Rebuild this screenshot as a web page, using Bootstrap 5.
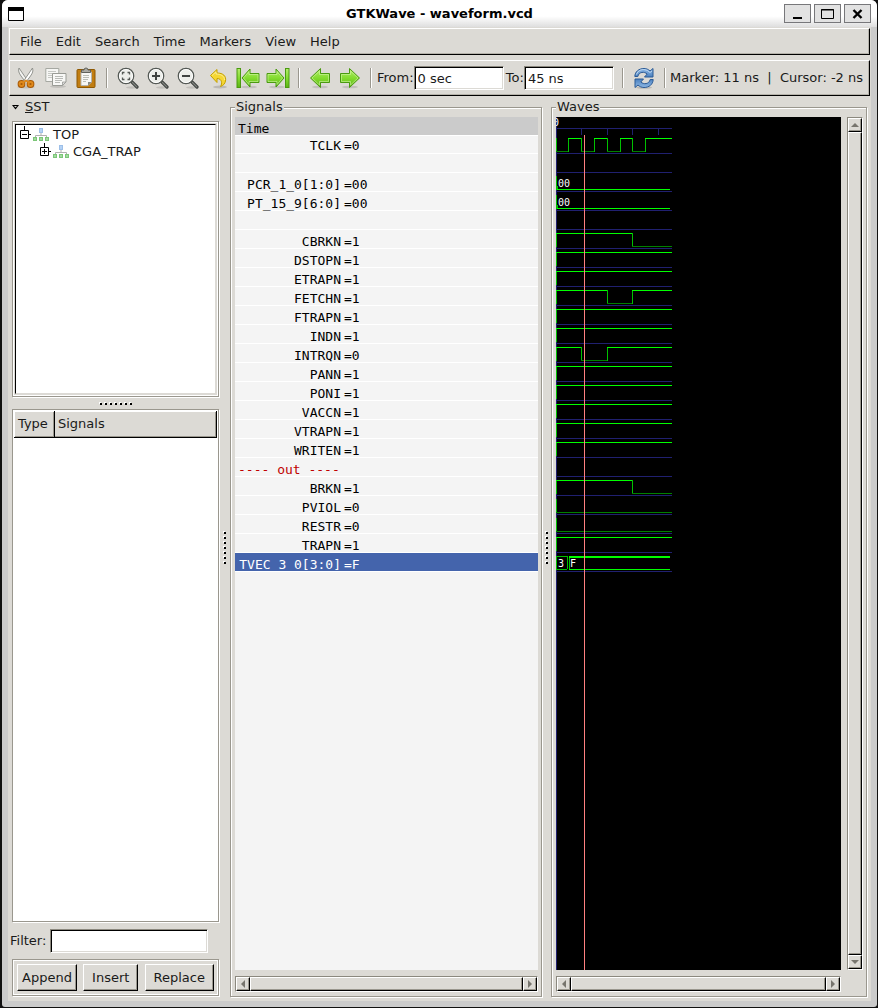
<!DOCTYPE html>
<html lang="en">
<head>
<meta charset="utf-8">
<meta name="viewport" content="width=device-width, initial-scale=1">
<title>GTKWave - waveform.vcd</title>
<link href="https://cdn.jsdelivr.net/npm/bootstrap@5.3.0/dist/css/bootstrap.min.css" rel="stylesheet">
<style>
:root{--face:#dcdad5;--shade:#9a978e;--edge:#cbcbcb}
body{background:#111;font:13px/16px "DejaVu Sans",sans-serif;color:#1a1a1a;padding:0 1px 1px 2px}
.app-window{background:var(--edge);border-radius:6px 6px 3px 3px;overflow:hidden}
.title-bar{height:27px;background:linear-gradient(#fff 60%,#dedede);padding:0 6px;color:#000}
.title-bar h1{font-size:13px;line-height:16px;font-weight:bold}
.win-btns{gap:3px}
.win-btn{width:27px;height:19px;padding:0;border:1px solid #77777a;background:#e2e2e2;border-radius:0;line-height:0}
.app-body{background:var(--face);margin:0 6px 6px;padding:1px 1px 0;min-height:0}
.bar{border:1px solid #fff;border-right-color:#000;border-bottom-color:#000;box-shadow:inset -1px -1px #b5b2aa}
.menu-bar{height:27px;padding:0 3px}
.menu-bar a{color:#1a1a1a;padding:0 7px;line-height:25px}
.menu-bar a:hover{color:#000}
.tool-bar{height:36px;margin-top:5px;padding:0 2px 0 1px}
.tool-btn{width:30px;height:30px;padding:0;border:0;background:none;line-height:0}
.tool-btn svg{width:22px;height:22px}
.tool-btn .wide-icon{width:24px}
.tool-sep{width:2px;height:20px;margin:0 5px;border-left:1px solid var(--shade);border-right:1px solid #fff}
.to-label{margin-left:2px}
.status-text{white-space:pre}
.sunken{border:1px solid;border-color:#8b887e #fff #fff #8b887e;box-shadow:inset 1px 1px #000,inset -1px -1px #dcdad5;background:#fff;border-radius:0;color:#1a1a1a;height:24px;padding:2px 3px;font-size:13px;min-width:0;outline:0}
.raised{background:var(--face);border:1px solid;border-color:#fff #000 #000 #fff;box-shadow:inset -1px -1px var(--shade);border-radius:0;color:#1a1a1a}
.etched{border:1px solid var(--shade);outline:1px solid #fff;outline-offset:-2px;box-shadow:1px 1px #fff}
.main-grid{display:grid;grid-template-columns:minmax(0,207fr) 11px minmax(0,312fr) 9px minmax(0,316fr);padding:3px 3px 4px;min-height:0}
.side-col{min-height:0;padding-bottom:1px}
.sst-row{gap:6px}
.tree-box{height:276px;margin-top:6px;padding:2px;background:var(--face)}
.tree-inner{background:#fff;height:100%;border:1px solid;border-color:#000 #dcdad5 #dcdad5 #000;padding:1px 0 0 3px}
.tree-inner li{height:17px}
.grip-row{height:12px}
.grip{width:36px;height:3px}
.grip-tall{width:3px;height:36px}
.list-box{background:#fff;padding:1px;min-height:0}
.list-box th{height:26px;padding:0 3px 1px;font-weight:normal;background:var(--face)}
.list-box .type-col{width:40px}
.filter-row{margin:7px 11px 6px -2px}
.btn-cell{padding:4px}
.btn-cell .btn{font-size:13px;line-height:16px;padding:4px 8px;height:27px}
.btn-cell .btn:first-child{padding:4px}
.pane{border:1px solid var(--shade);box-shadow:1px 1px #fff,inset 1px 1px #fff;padding:2px 3px 4px 4px;min-height:0}
.pane legend{float:none;width:auto;font-size:13px;line-height:16px;margin:0;padding:0 1px;background:var(--face)}
.sig-pane{background:#f4f4f4;overflow:hidden;min-height:0;font-family:"DejaVu Sans Mono",monospace;color:#000}
.sig-head{background:#cbcbcb;height:18px;line-height:24px;padding-left:3px;box-shadow:0 1px #fff}
.sig-table{width:100%;table-layout:fixed;margin-top:-1px}
.sig-table td{height:19px;line-height:18px;padding:3px 0 0;border-bottom:1px solid #fff;white-space:pre;vertical-align:top}
.sig-table td span{display:block;height:15px;line-height:17px}
.sig-name{width:107px;text-align:right}
.sig-table td.sig-name{padding-right:1px}
.sig-table .sig-val{padding-left:2px}
.sig-table .chosen td{background:#4464ac;color:#fff}
.sig-table .divider-row td{color:#c00000;padding-left:3px}
.wave-row{min-height:0;gap:6px}
.wave-pane{background:#000;overflow:hidden}
.wave-pane svg{display:block;width:100%;height:100%}
.wave-pane text{font:10px "DejaVu Sans Mono",monospace;fill:#fff;white-space:pre}
.scroll-h,.scroll-v{border:1px solid;border-color:#8b887e #fff #fff #8b887e}
.scroll-h{height:16px;margin-top:6px}
.scroll-v{width:16px}
.wave-scroll{margin-right:22px}
.scroll-btn{width:14px;height:14px;padding:0;line-height:0;flex:none}
.scroll-btn svg{display:block;margin:auto}
.shared-defs{position:absolute;width:0;height:0}
</style>
</head>
<body class="vh-100">
<svg class="shared-defs" aria-hidden="true">
 <defs>
  <linearGradient id="gGreen" x1="0" y1="0" x2="0" y2="1"><stop offset="0" stop-color="#b4ec6c"/><stop offset=".5" stop-color="#84dc30"/><stop offset="1" stop-color="#5cb414"/></linearGradient>
  <linearGradient id="gBlue" x1="0" y1="0" x2="0" y2="1"><stop offset="0" stop-color="#8fb8e4"/><stop offset="1" stop-color="#4a80bf"/></linearGradient>
 </defs>
 <symbol id="lens" viewBox="0 0 22 22"><ellipse cx="15" cy="20.500" rx="6" ry="1.200" fill="#000" opacity=".12"/><path d="M14.500 14.500l5.500 5.500" stroke="#3f4341" stroke-width="3.200" stroke-linecap="round"/><path d="M15.500 15.500l4.300 4.300" stroke="#81847f" stroke-width="1.200" stroke-linecap="round"/><circle cx="9" cy="9" r="7.700" fill="#eceeea" stroke="#555a56" stroke-width="1.300"/><circle cx="9" cy="9" r="6.500" fill="none" stroke="#fff"/></symbol>
 <symbol id="treeicon" viewBox="0 0 16 14"><path d="M8 4v3M2.500 9.500V7.500h11v2" fill="none" stroke="#b0b0b0"/><rect x="6.500" y=".5" width="3" height="4" fill="#b5d3f5" stroke="#9dbfe8"/><g fill="#a4dba0" stroke="#7cc678"><rect x=".5" y="9.500" width="3" height="3"/><rect x="6.500" y="9.500" width="3" height="3"/><rect x="12.500" y="9.500" width="3" height="3"/></g></symbol>
 <symbol id="dots" viewBox="0 0 36 3"><path d="M1 .5h2M6 .5h2M11 .5h2M16 .5h2M21 .5h2M26 .5h2M31 .5h2M1.500 0v2M6.500 0v2M11.500 0v2M16.500 0v2M21.500 0v2M26.500 0v2M31.500 0v2" stroke="#fff"/><path d="M2 2h2M7 2h2M12 2h2M17 2h2M22 2h2M27 2h2M32 2h2" stroke="#000" stroke-width="2"/></symbol>
 <symbol id="dotsTall" viewBox="0 0 3 36"><path d="M0 1.500h2M0 6.500h2M0 11.500h2M0 16.500h2M0 21.500h2M0 26.500h2M0 31.500h2M.5 1v2M.5 6v2M.5 11v2M.5 16v2M.5 21v2M.5 26v2M.5 31v2" stroke="#fff"/><path d="M2 2v2M2 7v2M2 12v2M2 17v2M2 22v2M2 27v2M2 32v2" stroke="#000" stroke-width="2"/></symbol>
 <symbol id="arrowL" viewBox="0 0 22 22"><ellipse cx="11" cy="20" rx="8" ry="1.300" fill="#000" opacity=".12"/><path d="M1.500 11L11.500 1.500v5h9v9h-9v5z" fill="url(#gGreen)" stroke="#4a9a10" stroke-linejoin="round"/><path d="M3 11l7.500-7v3.500h9v7h-9v3.500z" fill="none" stroke="#d6f7ab" stroke-opacity=".55"/></symbol>
 <symbol id="arrowEnd" viewBox="0 0 24 22"><ellipse cx="13" cy="20" rx="8" ry="1.300" fill="#000" opacity=".12"/><rect x="1" y="1.500" width="3.500" height="19" fill="url(#gGreen)" stroke="#4a9a10"/><path d="M6 11l8-9v4.500h9v9h-9V20z" fill="url(#gGreen)" stroke="#4a9a10" stroke-linejoin="round"/><path d="M7.500 11L13 4.500v3h9v7h-9v3z" fill="none" stroke="#d6f7ab" stroke-opacity=".55"/></symbol>
</svg>

<div class="app-window d-flex flex-column h-100">
 <header class="title-bar d-flex align-items-center flex-shrink-0">
  <div class="col"><svg width="16" height="14" class="d-block"><path d="M.5.5h15v13H.5z" fill="#fff" stroke="#000"/><path d="M0 0h16v4H0z"/></svg></div>
  <h1 class="m-0">GTKWave - waveform.vcd</h1>
  <div class="win-btns col d-flex justify-content-end">
   <button class="win-btn" aria-label="Minimize"><svg width="19" height="15"><path d="M5 12h9" stroke="#000" stroke-width="2"/></svg></button>
   <button class="win-btn" aria-label="Maximize"><svg width="19" height="15"><path d="M3.500 3.500h12v9h-12zM3 4h13" fill="none" stroke="#000"/></svg></button>
   <button class="win-btn" aria-label="Close"><svg width="19" height="15"><path d="M5.500 4l8 8m0-8l-8 8" stroke="#000" stroke-width="2.400"/></svg></button>
  </div>
 </header>

 <div class="app-body d-flex flex-column flex-grow-1">
  <nav class="bar menu-bar nav flex-nowrap flex-shrink-0" aria-label="Menu">
   <a class="nav-link" href="#">File</a><a class="nav-link" href="#">Edit</a><a class="nav-link" href="#">Search</a><a class="nav-link" href="#">Time</a><a class="nav-link" href="#">Markers</a><a class="nav-link" href="#">View</a><a class="nav-link" href="#">Help</a>
  </nav>

  <div class="bar tool-bar d-flex align-items-center flex-shrink-0 text-nowrap" role="toolbar">
   <button class="tool-btn" aria-label="Cut"><svg viewBox="0 0 22 22"><ellipse cx="11" cy="20" rx="9" ry="1.500" fill="#000" opacity=".12"/><path d="M4 1c-1 3 0 5 2 8l4.500 6 2-1.500z" fill="#f4f4f2" stroke="#888a85" stroke-width=".9"/><path d="M17.500 1c1 3 0 5-2 8L11 15l-2-1.500z" fill="#fff" stroke="#888a85" stroke-width=".9"/><g fill="none" stroke="#a85a08" stroke-width="3.800"><rect x="4.500" y="15" width="4" height="4" rx="2"/><rect x="13.500" y="15" width="4" height="4" rx="2"/></g><g fill="none" stroke="#e08a1c" stroke-width="1.800"><rect x="4.500" y="15" width="4" height="4" rx="2"/><rect x="13.500" y="15" width="4" height="4" rx="2"/><path d="M8 15.500l3-2 3 2"/></g></svg></button>
   <button class="tool-btn" aria-label="Copy"><svg viewBox="0 0 22 22"><ellipse cx="13" cy="19.500" rx="8" ry="1.500" fill="#000" opacity=".12"/><path d="M.8 1.500h13v13h-13z" fill="#f6f6f4" stroke="#a6a8a2"/><path d="M3 4.500h8M3 6.500h8M3 8.500h5M3 10.500h4" stroke="#c6c8c4"/><path d="M7.500 6.500h13.500v8.500l-3.500 3.500h-10z" fill="#f8f8f6" stroke="#999b95"/><path d="M10 9.500h8M10 11.500h8M10 13.500h7M10 15.500h5" stroke="#b8bab6"/><path d="M17.500 18.500v-3.500H21z" fill="#ddd" stroke="#999b95" stroke-width=".8"/></svg></button>
   <button class="tool-btn" aria-label="Paste"><svg viewBox="0 0 22 22"><rect x="2" y="2.500" width="18" height="18" rx="1" fill="#c17d11" stroke="#8f5902"/><path d="M6 5h10.500v10l-3.500 3.500H6z" fill="#f7f7f5" stroke="#b5b5b1"/><path d="M8 8.500h6M8 10.500h6M8 12.500h5M8 14.500h3" stroke="#babdb6"/><path d="M13 18.500v-3.500h3.500z" fill="#888a85"/><path d="M6.500 5.500V3h2.500q0-2 2-2t2 2h2.500v2.500z" fill="#aaa9a3" stroke="#5f615c"/></svg></button>
   <div class="tool-sep"></div>
   <button class="tool-btn" aria-label="Zoom fit"><svg viewBox="0 0 22 22"><use href="#lens"/><path d="M5.500 7.500v-2h2M10.500 5.500h2v2M12.500 10.500v2h-2M7.500 12.500h-2v-2" fill="none" stroke="#555a56" stroke-width="1.300"/></svg></button>
   <button class="tool-btn" aria-label="Zoom in"><svg viewBox="0 0 22 22"><use href="#lens"/><path d="M5 9h8M9 5v8" stroke="#3f4341" stroke-width="2"/></svg></button>
   <button class="tool-btn" aria-label="Zoom out"><svg viewBox="0 0 22 22"><use href="#lens"/><path d="M5 9h8" stroke="#3f4341" stroke-width="2"/></svg></button>
   <button class="tool-btn" aria-label="Undo"><svg viewBox="0 0 22 22"><ellipse cx="13" cy="20" rx="7" ry="1.500" fill="#000" opacity=".15"/><path d="M3.500 8.500L10 2.500v3.500c6 0 9.500 3 8.500 8-.5 2.500-2 4.500-5 5.500 2-3 1.500-8-3.500-8v4z" fill="#f5d733" stroke="#c4a000" stroke-linejoin="round"/><path d="M5 8.500l4-3.700V7c5 0 8.500 2 8.500 6" fill="none" stroke="#fdf3a8" stroke-width=".8"/></svg></button>
   <button class="tool-btn" aria-label="Zoom to start"><svg viewBox="0 0 24 22" class="wide-icon"><use href="#arrowEnd"/></svg></button>
   <button class="tool-btn" aria-label="Zoom to end"><svg viewBox="0 0 24 22" class="wide-icon"><use href="#arrowEnd" transform="translate(24 0) scale(-1 1)"/></svg></button>
   <div class="tool-sep"></div>
   <button class="tool-btn" aria-label="Previous edge"><svg viewBox="0 0 22 22"><use href="#arrowL"/></svg></button>
   <button class="tool-btn" aria-label="Next edge"><svg viewBox="0 0 22 22"><use href="#arrowL" transform="translate(22 0) scale(-1 1)"/></svg></button>
   <div class="tool-sep"></div>
   <label for="from">From:</label><input id="from" class="sunken col" value="0 sec">
   <label for="to" class="to-label">To:</label><input id="to" class="sunken col" value="45 ns">
   <div class="tool-sep ms-2"></div>
   <button class="tool-btn" aria-label="Reload"><svg viewBox="0 0 22 22"><ellipse cx="11" cy="20.500" rx="8" ry="1.300" fill="#000" opacity=".15"/><g fill="url(#gBlue)" stroke="#2b5a95" stroke-linejoin="round"><path id="turn" d="M1.800 9.500C2 4.500 6 1.500 11 1.500c2.500 0 4.500 1 6 2.500l3-2.500v8.500h-8.500l2.700-3C11.500 4.500 6 4.500 4.800 9.500z"/><use href="#turn" transform="rotate(180 11 11)"/></g><path d="M3.500 7.500C5 3 9 2.500 11 2.500q3.500.2 6 3l2-1.500" fill="none" stroke="#c3dbf3" stroke-width=".9"/></svg></button>
   <div class="tool-sep me-1"></div>
   <output class="status-text pe-1">Marker: 11 ns  |  Cursor: -2 ns</output>
  </div>

  <main class="main-grid flex-grow-1">
   <div class="side-col d-flex flex-column">
    <div class="sst-row d-flex align-items-center flex-shrink-0"><svg width="7" height="5"><path d="M0 0h7L3.500 4.500z" fill="#000"/><path d="M2 1h3L3.500 2.500z" fill="#dcdad5"/></svg><span><u>S</u>ST</span></div>
    <div class="tree-box etched flex-shrink-0">
     <ul class="tree-inner list-unstyled m-0">
      <li class="d-flex align-items-center"><svg width="14" height="17"><path d="M5.500 0v4M10 8.500h2M1.500 4.500h8v8h-8zM3 8.500h5" fill="none" stroke="#000"/></svg><svg width="16" height="14"><use href="#treeicon"/></svg><span class="ps-1">TOP</span></li>
      <li class="d-flex align-items-center ps-3"><svg width="18" height="17"><path d="M9.500 0v4M14 8.500h2M5.500 4.500h8v8h-8zM7 8.500h5M9.500 6v5" fill="none" stroke="#000"/></svg><svg width="16" height="14"><use href="#treeicon"/></svg><span class="ps-1">CGA_TRAP</span></li>
     </ul>
    </div>
    <div class="grip-row d-flex justify-content-center align-items-center flex-shrink-0"><svg class="grip"><use href="#dots"/></svg></div>
    <div class="list-box etched flex-grow-1">
     <table class="w-100"><thead><tr><th class="raised type-col">Type</th><th class="raised">Signals</th></tr></thead></table>
    </div>
    <div class="filter-row d-flex align-items-center flex-shrink-0"><label for="filter" class="me-1">Filter:</label><input id="filter" class="sunken flex-grow-1"></div>
    <div class="btn-cell etched d-flex flex-shrink-0 justify-content-between">
     <button class="btn raised">Append</button><button class="btn raised">Insert</button><button class="btn raised">Replace</button>
    </div>
   </div>
   <div class="d-flex align-items-center justify-content-center"><svg class="grip-tall"><use href="#dotsTall"/></svg></div>
   <fieldset class="pane d-flex flex-column">
    <legend>Signals</legend>
    <div class="sig-pane flex-grow-1">
     <div class="sig-head">Time</div>
     <table class="sig-table"><colgroup><col class="sig-name"><col></colgroup><tbody id="signals"></tbody></table>
    </div>
    <div class="scroll-h d-flex flex-shrink-0">
     <button class="scroll-btn raised" aria-label="Left"><svg width="10" height="10"><path d="M7 1v8L3 5z" fill="#77756e"/></svg></button><div class="raised flex-grow-1"></div><button class="scroll-btn raised" aria-label="Right"><svg width="10" height="10"><path d="M3 1v8l4-4z" fill="#77756e"/></svg></button>
    </div>
   </fieldset>
   <div class="d-flex align-items-center justify-content-center"><svg class="grip-tall"><use href="#dotsTall"/></svg></div>
   <fieldset class="pane d-flex flex-column">
    <legend>Waves</legend>
    <div class="wave-row d-flex flex-grow-1">
     <div class="wave-pane flex-grow-1"><svg id="waves" shape-rendering="crispEdges"></svg></div>
     <div class="scroll-v d-flex flex-column flex-shrink-0">
      <button class="scroll-btn raised" aria-label="Up"><svg width="10" height="10"><path d="M1 7h8L5 3z" fill="#77756e"/></svg></button><div class="raised flex-grow-1"></div><button class="scroll-btn raised" aria-label="Down"><svg width="10" height="10"><path d="M1 3h8L5 7z" fill="#77756e"/></svg></button>
     </div>
    </div>
    <div class="scroll-h wave-scroll d-flex flex-shrink-0">
     <button class="scroll-btn raised" aria-label="Left"><svg width="10" height="10"><path d="M7 1v8L3 5z" fill="#77756e"/></svg></button><div class="raised flex-grow-1"></div><button class="scroll-btn raised" aria-label="Right"><svg width="10" height="10"><path d="M3 1v8l4-4z" fill="#77756e"/></svg></button>
    </div>
   </fieldset>
  </main>
 </div>
</div>

<script src="https://cdn.jsdelivr.net/npm/bootstrap@5.3.0/dist/js/bootstrap.bundle.min.js"></script>
<script>
// name, value at the marker, starting level, x of each level change
const rows = [
 ['TCLK','0',0,[12,25,38,51,64,76,89]], null,
 ['PCR_1_0[1:0]','00','bus'], ['PT_15_9[6:0]','00','bus'], null,
 ['CBRKN','1',1,[76]], ['DSTOPN','1',1,[]], ['ETRAPN','1',1,[]], ['FETCHN','1',1,[51,76]],
 ['FTRAPN','1',1,[]], ['INDN','1',1,[]], ['INTRQN','0',1,[25,51]], ['PANN','1',1,[]],
 ['PONI','1',1,[]], ['VACCN','1',1,[]], ['VTRAPN','1',1,[]], ['WRITEN','1',1,[]],
 '---- out ----',
 ['BRKN','1',1,[76]], ['PVIOL','0',0,[]], ['RESTR','0',0,[]], ['TRAPN','1',1,[]],
 ['TVEC_3_0[3:0]','F','vec']
];
const END = 116, HIGH = '#00ff00', LOW = '#008000', EDGE = '#00c000', GRID = '#202070';
const hline = (x1, x2, y, c) => `<rect x="${x1}" y="${y}" width="${x2 - x1}" height="1" fill="${c}"/>`;
const vline = (x, y1, y2, c) => `<rect x="${x}" y="${y1}" width="1" height="${y2 - y1}" fill="${c}"/>`;
let table = '', svg = `<rect width="1" height="100%" fill="${GRID}"/>` + hline(0, END, 11, GRID);
[25, 51, 76, 102].forEach(x => svg += vline(x, 11, 18, GRID));
svg += '<text x="-3" y="9">0</text>';
rows.forEach((r, i) => {
 const top = 21 + 19 * i, low = top + 13;
 svg += hline(0, END, top + 15, GRID);
 if (!r) { table += '<tr><td></td><td></td></tr>'; return; }
 if (typeof r === 'string') { table += `<tr class="divider-row"><td colspan="2"><span>${r}</span></td></tr>`; return; }
 table += `<tr${r[2] === 'vec' ? ' class="chosen"' : ''}><td class="sig-name"><span>${r[0]}</span></td><td class="sig-val"><span>=${r[1]}</span></td></tr>`;
 svg += vline(0, top, low + 1, EDGE);
 if (r[2] === 'bus') {
  svg += vline(1, low - 3, low, EDGE) + hline(1, 114, low, HIGH) + `<text x="2" y="${low - 2}">${r[1]}</text>`;
 } else if (r[2] === 'vec') {
  svg += hline(1, 11, top, EDGE) + hline(1, 11, low, EDGE) + vline(11, top, low, EDGE)
   + vline(13, top, low, EDGE) + hline(13, 114, top, HIGH) + hline(13, 114, top + 1, HIGH) + hline(13, 114, low, HIGH)
   + `<text x="2" y="${low - 2}">3</text><text x="14" y="${low - 2}">F</text>`;
 } else {
  let x = 0, level = r[2];
  [...r[3], END].forEach(n => {
   svg += hline(x, n, level ? top : low, level ? HIGH : LOW);
   if (n < END) svg += vline(n, top, low + 1, EDGE);
   x = n; level = 1 - level;
  });
 }
});
svg += '<rect x="28" y="18" width="1" height="100%" fill="#ff8080"/>';
document.getElementById('signals').innerHTML = table;
document.getElementById('waves').innerHTML = svg;
</script>
</body>
</html>
